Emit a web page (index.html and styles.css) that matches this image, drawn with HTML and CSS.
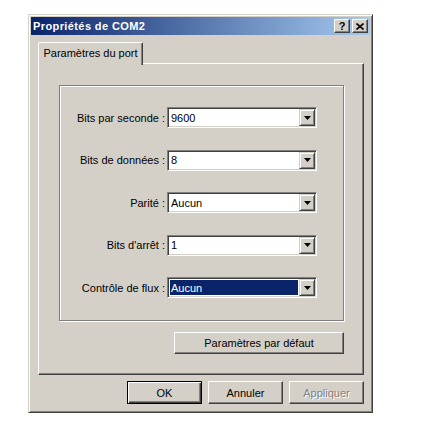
FILE: index.html
```html
<!DOCTYPE html>
<html lang="fr">
<head>
  <meta charset="UTF-8" />
  <title>Propriétés de COM2</title>
  <link rel="stylesheet" href="styles.css">
</head>
<body>
  <div class="window">
    <div class="titlebar">
      <span class="title">Propriétés de COM2</span>
      <div class="caption-btns">
        <div class="cap-btn cap-help">?</div>
        <div class="cap-btn">
          <svg width="8" height="7" viewBox="0 0 8 7">
            <path d="M0.5 0.5 L7.5 6.5 M7.5 0.5 L0.5 6.5" stroke="#000" stroke-width="1.6" fill="none"/>
          </svg>
        </div>
      </div>
    </div>

    <div class="dialog-body">
      <div class="tabs">
        <div class="tab">Paramètres du port</div>
      </div>

      <div class="panel">
        <div class="group">
          <div class="field">
            <label class="field-label">Bits par seconde :</label>
            <div class="combo"><span class="combo-value">9600</span><span class="combo-arrow"><svg width="7" height="4" viewBox="0 0 7 4"><polygon points="0,0 7,0 3.5,4" fill="#000"/></svg></span></div>
          </div>
          <div class="field">
            <label class="field-label">Bits de données :</label>
            <div class="combo"><span class="combo-value">8</span><span class="combo-arrow"><svg width="7" height="4" viewBox="0 0 7 4"><polygon points="0,0 7,0 3.5,4" fill="#000"/></svg></span></div>
          </div>
          <div class="field">
            <label class="field-label">Parité :</label>
            <div class="combo"><span class="combo-value">Aucun</span><span class="combo-arrow"><svg width="7" height="4" viewBox="0 0 7 4"><polygon points="0,0 7,0 3.5,4" fill="#000"/></svg></span></div>
          </div>
          <div class="field">
            <label class="field-label">Bits d'arrêt :</label>
            <div class="combo"><span class="combo-value">1</span><span class="combo-arrow"><svg width="7" height="4" viewBox="0 0 7 4"><polygon points="0,0 7,0 3.5,4" fill="#000"/></svg></span></div>
          </div>
          <div class="field">
            <label class="field-label">Contrôle de flux :</label>
            <div class="combo"><span class="combo-value selected">Aucun</span><span class="combo-arrow"><svg width="7" height="4" viewBox="0 0 7 4"><polygon points="0,0 7,0 3.5,4" fill="#000"/></svg></span></div>
          </div>
        </div>

        <div class="panel-actions">
          <div class="btn btn-wide">Paramètres par défaut</div>
        </div>
      </div>

      <div class="dialog-actions">
        <div class="btn btn-default">OK</div>
        <div class="btn">Annuler</div>
        <div class="btn btn-disabled">Appliquer</div>
      </div>
    </div>
  </div>
</body>
</html>
```

FILE: styles.css
```css
body {
  margin: 0;
  background-color: #ffffff;
  font-family: 'Liberation Sans', Arial, sans-serif;
  font-size: 11px;
  color: #000;
}

.window {
  box-sizing: border-box;
  width: 345px;
  margin: 14px 0 0 28px;
  padding: 2px;
  background-color: #d4d0c8;
  border: 1px solid;
  border-color: #d4d0c8 #404040 #404040 #d4d0c8;
  box-shadow: inset 1px 1px #fff, inset -1px -1px #808080;
}

.titlebar {
  height: 18px;
  display: flex;
  align-items: center;
  justify-content: space-between;
  padding: 0 2px;
  background: linear-gradient(to right, #0a246a, #a6caf0);
}

.title {
  color: #fff;
  font-weight: 700;
  letter-spacing: 0.4px;
}

.caption-btns {
  display: flex;
  gap: 2px;
}

.cap-btn {
  box-sizing: border-box;
  width: 16px;
  height: 14px;
  display: flex;
  align-items: center;
  justify-content: center;
  background-color: #d4d0c8;
  border: 1px solid;
  border-color: #fff #404040 #404040 #fff;
  box-shadow: inset -1px -1px #808080;
}

.cap-help {
  font-weight: 700;
  font-size: 11px;
  line-height: 1;
}

.dialog-body {
  padding: 7px 6px 6px 7px;
}

.tabs {
  height: 21px;
  display: flex;
  position: relative;
  z-index: 1;
}

.tab {
  box-sizing: border-box;
  width: 105px;
  height: 23px;
  display: flex;
  align-items: center;
  justify-content: center;
  padding-bottom: 2px;
  background-color: #d4d0c8;
  border: 1px solid;
  border-color: #fff #404040 transparent #fff;
  border-bottom: none;
  border-radius: 2px 2px 0 0;
  box-shadow: inset -1px 0 #808080;
}

.panel {
  box-sizing: border-box;
  padding: 21px 19px 20px 20px;
  border: 1px solid;
  border-color: #fff #404040 #404040 #fff;
  box-shadow: inset -1px -1px #808080;
}

.group {
  padding: 21px 0 22px;
  border: 1px solid #808080;
  box-shadow: inset 1px 1px #fff, 1px 1px #fff;
  display: flex;
  flex-direction: column;
  gap: 21.5px;
}

.field {
  display: flex;
  align-items: center;
  height: 21px;
}

.field-label {
  width: 105px;
  margin-right: 2px;
  text-align: right;
}

.combo {
  box-sizing: border-box;
  width: 150px;
  height: 21px;
  display: flex;
  padding: 1px;
  background-color: #fff;
  border: 1px solid;
  border-color: #808080 #fff #fff #808080;
  box-shadow: inset 1px 1px #404040, inset -1px -1px #d4d0c8;
}

.combo-value {
  flex: 1;
  margin: 1px 1px 1px 1px;
  padding-left: 1px;
  display: flex;
  align-items: center;
}

.combo-value.selected {
  background-color: #0a246a;
  color: #fff;
}

.combo-arrow {
  box-sizing: border-box;
  width: 16px;
  height: 17px;
  display: flex;
  align-items: center;
  justify-content: center;
  background-color: #d4d0c8;
  border: 1px solid;
  border-color: #d4d0c8 #404040 #404040 #d4d0c8;
  box-shadow: inset 1px 1px #fff, inset -1px -1px #808080;
}

.panel-actions {
  display: flex;
  justify-content: flex-end;
  margin-top: 11px;
}

.btn {
  box-sizing: border-box;
  width: 75px;
  height: 23px;
  display: flex;
  align-items: center;
  justify-content: center;
  background-color: #d4d0c8;
  border: 1px solid;
  border-color: #fff #404040 #404040 #fff;
  box-shadow: inset -1px -1px #808080;
}

.btn-wide {
  width: 170px;
  height: 22px;
}

.btn-default {
  border-color: #000;
  box-shadow: inset 1px 1px #fff, inset -1px -1px #404040, inset -2px -2px #808080;
}

.btn-disabled {
  color: #808080;
  text-shadow: 1px 1px #fff;
}

.dialog-actions {
  display: flex;
  justify-content: flex-end;
  gap: 6px;
  margin-top: 6px;
}
```
